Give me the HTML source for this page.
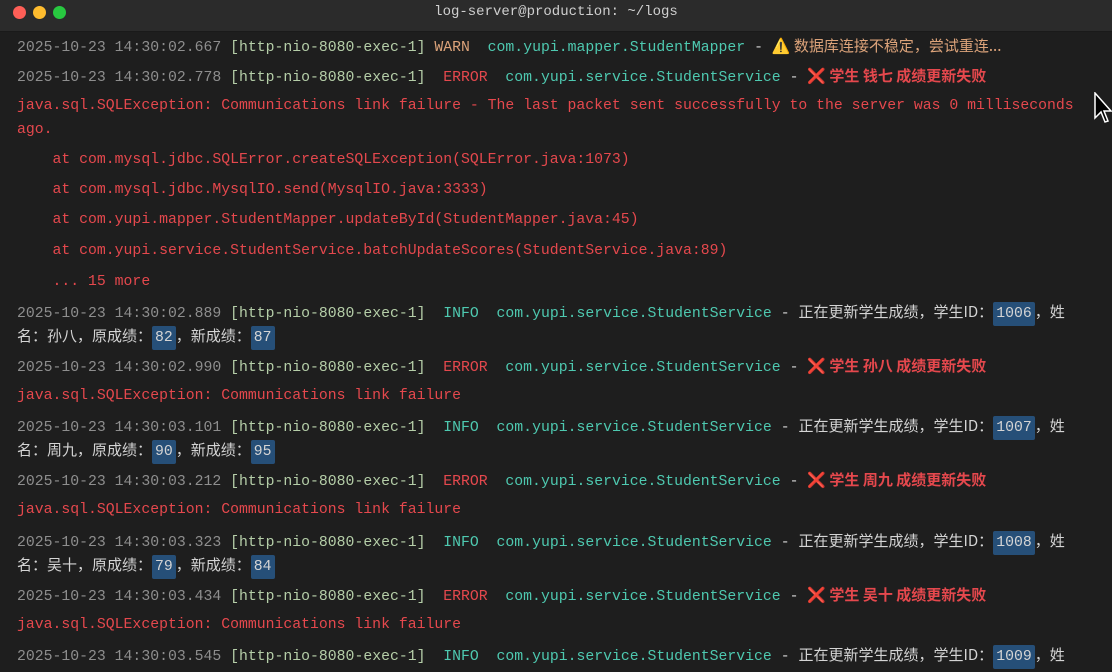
<!DOCTYPE html>
<html><head><meta charset="utf-8"><style>
html,body{margin:0;padding:0;width:1112px;height:666px;overflow:hidden;background:#1e1e1e}
.bar{position:absolute;left:0;top:0;width:1112px;height:31px;background:#2b2b2b;border-bottom:1px solid #1a1a1a}
.dot{position:absolute;top:6px;width:13px;height:13px;border-radius:50%}
.title{position:absolute;top:4px;left:0;width:1112px;text-align:center;line-height:20px;color:#cfcfcf;font:14px "Liberation Mono",monospace}
.l{position:absolute;left:17px;height:30px;line-height:30px;white-space:pre;font-family:"Liberation Mono","Noto Sans CJK SC",monospace;font-size:14.8px;color:#d4d4d4}
.ts{color:#8e8e8e}.th{color:#b5cea8}.w{color:#dca37a}.e{color:#e5484d}.i{color:#4ec9b0}.c{color:#4ec9b0}
.r{color:#e5484d}.cj{font-family:"Noto Sans CJK SC",sans-serif;font-size:15px}
.b{font-weight:bold}
.n{background:#264f78;color:#d4d4d4;padding:4px 3px;border-radius:2px}
</style></head><body>
<div class="bar">
<div class="dot" style="left:13px;background:#fe5f57"></div>
<div class="dot" style="left:33px;background:#febc2e"></div>
<div class="dot" style="left:53px;background:#28c840"></div>
<div class="title">log-server@production: ~/logs</div>
</div>

<div class="l" style="top:31px"><span class="ts">2025-10-23 14:30:02.667</span> <span class="th">[http-nio-8080-exec-1]</span> <span class="w">WARN</span>  <span class="c">com.yupi.mapper.StudentMapper</span> - <span class="w cj">⚠️ 数据库连接不稳定，尝试重连...</span></div>
<div class="l" style="top:61px"><span class="ts">2025-10-23 14:30:02.778</span> <span class="th">[http-nio-8080-exec-1]</span>  <span class="e">ERROR</span>  <span class="c">com.yupi.service.StudentService</span> - <span class="r cj b">❌ 学生 钱七 成绩更新失败</span></div>
<div class="l r" style="top:91px">java.sql.SQLException: Communications link failure - The last packet sent successfully to the server was 0 milliseconds</div>
<div class="l r" style="top:115px">ago.</div>
<div class="l r" style="top:145px">    at com.mysql.jdbc.SQLError.createSQLException(SQLError.java:1073)</div>
<div class="l r" style="top:175px">    at com.mysql.jdbc.MysqlIO.send(MysqlIO.java:3333)</div>
<div class="l r" style="top:205px">    at com.yupi.mapper.StudentMapper.updateById(StudentMapper.java:45)</div>
<div class="l r" style="top:236px">    at com.yupi.service.StudentService.batchUpdateScores(StudentService.java:89)</div>
<div class="l r" style="top:267px">    ... 15 more</div>

<div class="l" style="top:297px"><span class="ts">2025-10-23 14:30:02.889</span> <span class="th">[http-nio-8080-exec-1]</span>  <span class="i">INFO</span>  <span class="c">com.yupi.service.StudentService</span> - <span class="cj">正在更新学生成绩，学生ID：</span><span class="n">1006</span><span class="cj">，姓</span></div>
<div class="l" style="top:321px"><span class="cj">名：孙八，原成绩：</span><span class="n">82</span><span class="cj">，新成绩：</span><span class="n">87</span></div>
<div class="l" style="top:351px"><span class="ts">2025-10-23 14:30:02.990</span> <span class="th">[http-nio-8080-exec-1]</span>  <span class="e">ERROR</span>  <span class="c">com.yupi.service.StudentService</span> - <span class="r cj b">❌ 学生 孙八 成绩更新失败</span></div>
<div class="l r" style="top:381px">java.sql.SQLException: Communications link failure</div>

<div class="l" style="top:411px"><span class="ts">2025-10-23 14:30:03.101</span> <span class="th">[http-nio-8080-exec-1]</span>  <span class="i">INFO</span>  <span class="c">com.yupi.service.StudentService</span> - <span class="cj">正在更新学生成绩，学生ID：</span><span class="n">1007</span><span class="cj">，姓</span></div>
<div class="l" style="top:435px"><span class="cj">名：周九，原成绩：</span><span class="n">90</span><span class="cj">，新成绩：</span><span class="n">95</span></div>
<div class="l" style="top:465px"><span class="ts">2025-10-23 14:30:03.212</span> <span class="th">[http-nio-8080-exec-1]</span>  <span class="e">ERROR</span>  <span class="c">com.yupi.service.StudentService</span> - <span class="r cj b">❌ 学生 周九 成绩更新失败</span></div>
<div class="l r" style="top:495px">java.sql.SQLException: Communications link failure</div>

<div class="l" style="top:526px"><span class="ts">2025-10-23 14:30:03.323</span> <span class="th">[http-nio-8080-exec-1]</span>  <span class="i">INFO</span>  <span class="c">com.yupi.service.StudentService</span> - <span class="cj">正在更新学生成绩，学生ID：</span><span class="n">1008</span><span class="cj">，姓</span></div>
<div class="l" style="top:550px"><span class="cj">名：吴十，原成绩：</span><span class="n">79</span><span class="cj">，新成绩：</span><span class="n">84</span></div>
<div class="l" style="top:580px"><span class="ts">2025-10-23 14:30:03.434</span> <span class="th">[http-nio-8080-exec-1]</span>  <span class="e">ERROR</span>  <span class="c">com.yupi.service.StudentService</span> - <span class="r cj b">❌ 学生 吴十 成绩更新失败</span></div>
<div class="l r" style="top:610px">java.sql.SQLException: Communications link failure</div>
<div class="l" style="top:640px"><span class="ts">2025-10-23 14:30:03.545</span> <span class="th">[http-nio-8080-exec-1]</span>  <span class="i">INFO</span>  <span class="c">com.yupi.service.StudentService</span> - <span class="cj">正在更新学生成绩，学生ID：</span><span class="n">1009</span><span class="cj">，姓</span></div>

<svg style="position:absolute;left:1094px;top:92px" width="18" height="32" viewBox="0 0 18 32"><path d="M1 1 L1 26 L7 20 L11 30 L14 29 L10 19 L17 19 Z" fill="#000" stroke="#fff" stroke-width="1.5"/></svg>
</body></html>
